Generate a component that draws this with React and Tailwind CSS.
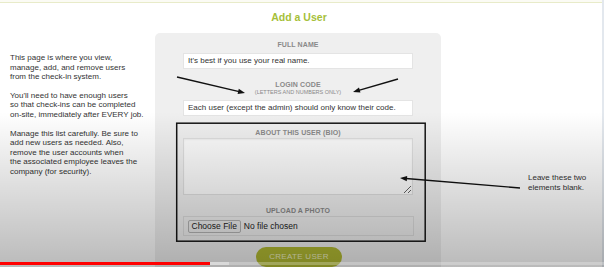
import React from 'react'

const arrow = (x1, y1, x2, y2, len = 7, half = 2.6) => {
  const dx = x2 - x1
  const dy = y2 - y1
  const d = Math.hypot(dx, dy)
  const ux = dx / d
  const uy = dy / d
  const bx = x2 - ux * len
  const by = y2 - uy * len
  const pts = `${x2},${y2} ${bx - uy * half},${by + ux * half} ${bx + uy * half},${by - ux * half}`
  return (
    <g>
      <line x1={x1} y1={y1} x2={bx + ux} y2={by + uy} stroke="#111" strokeWidth="1.4" />
      <polygon points={pts} fill="#111" />
    </g>
  )
}

function Label({ children, className = '' }) {
  return <div className={`text-[7px] font-bold text-[#8a8a8a] leading-[9px] tracking-[0.1px] ${className}`}>{children}</div>
}

export default function App() {
  return (
    <div className="relative w-[604px] h-[267px] overflow-hidden bg-white font-['Liberation_Sans',Arial,sans-serif]">
      <div className="flex h-full">
        <div className="flex-1 flex flex-col">
          <div className="h-[2px] bg-[#fbfbf4]" />
          <div className="h-[1px] bg-[#e8ebc9]" />
          <div className="h-[33px] pb-[1px] flex items-center justify-center">
            <span className="ml-[-4px] text-[10.5px] font-bold text-[#a6bf3a]">Add a User</span>
          </div>

          <div className="flex flex-1">
            <div className="w-[155px] pl-[10px] pt-[20px] text-[8px] leading-[9.6px] text-[#333]">
              <p>This page is where you view,<br />manage, add, and remove users<br />from the check-in system.</p>
              <p className="mt-[9px]">You'll need to have enough users<br />so that check-ins can be completed<br />on-site, immediately after EVERY job.</p>
              <p className="mt-[9px]">Manage this list carefully. Be sure to<br />add new users as needed. Also,<br />remove the user accounts when<br />the associated employee leaves the<br />company (for security).</p>
            </div>

            <div className="w-[286px] rounded-t-[5px] bg-[#efefef] flex flex-col items-center pt-[7px]">
              <Label>FULL NAME</Label>
              <div className="mt-[4px] w-[230px] h-[16px] bg-white border border-[#e4e4e4] pl-[4px] flex items-center text-[8px] text-[#333]">
                It's best if you use your real name.
              </div>
              <Label className="mt-[11px] leading-[8px]">LOGIN CODE</Label>
              <div className="text-[5.5px] text-[#8a8a8a] leading-[6px]">(LETTERS AND NUMBERS ONLY)</div>
              <div className="mt-[5px] w-[230px] h-[16px] bg-white border border-[#e4e4e4] pl-[4px] flex items-center text-[8px] text-[#333]">
                Each user (except the admin) should only know their code.
              </div>
              <Label className="mt-[11.5px]">ABOUT THIS USER (BIO)</Label>
              <textarea className="mt-[1.5px] w-[230px] h-[57px] bg-[#fbfbfb] border border-[#dedede] shadow-[inset_0_1px_2px_rgba(0,0,0,0.06)] outline-none" />
              <Label className="mt-[10.5px]">UPLOAD A PHOTO</Label>
              <div className="mt-[1.5px] w-[231px] h-[20px] border border-[#dcdcdc] flex items-center pl-[4px] gap-[3px] text-[8px] text-[#222]">
                <span className="h-[13px] px-[3px] flex items-center bg-[#ececec] border border-[#b3b3b3] rounded-[2px] text-[8.5px]">Choose File</span>
                <span className="text-[8.5px]">No file chosen</span>
              </div>
              <button className="mt-[11px] ml-[2px] w-[86px] h-[20px] rounded-full bg-[#b1b932] text-[8px] text-[#eceec4] tracking-[0.3px] shrink-0">
                CREATE USER
              </button>
            </div>

            <div className="flex-1 pl-[87px] pt-[140px] text-[8px] leading-[9.5px] text-[#333]">
              Leave these two<br />elements blank.
            </div>
          </div>
        </div>
        <div className="w-[2px] bg-[#e3e8ee]" />
      </div>

      <svg className="absolute inset-0 pointer-events-none" width="604" height="267">
        <rect x="176.7" y="123.2" width="248.5" height="118" fill="none" stroke="#151515" strokeWidth="1.5" />
        {arrow(177, 77, 245, 93)}
        {arrow(398, 79, 353, 92)}
        {arrow(520, 188, 400, 178)}
      </svg>

      <div className="absolute inset-0 pointer-events-none bg-[linear-gradient(to_bottom,transparent_42%,rgba(0,0,0,0.27))]" />

      <div className="absolute left-0 right-0 top-[262px] h-[3px] flex bg-white/25">
        <div className="w-[210px] bg-[#ff0000]" />
        <div className="w-[19px] bg-[#d9d9d9]" />
      </div>
    </div>
  )
}
